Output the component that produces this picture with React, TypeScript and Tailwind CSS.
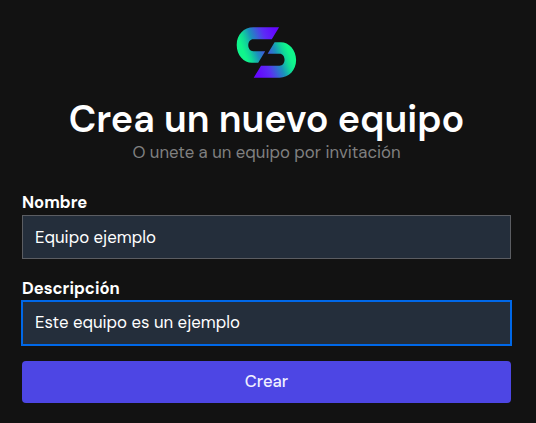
import { useState } from 'react';

function Logo() {
  const blade =
    'M160 33H82C54 33 32 55 32 86C32 117 54 140 78 140H97L118 105H82C73 105 67 97 67 87C67 77 73 69 82 69H138Z';
  return (
    <svg viewBox="31 32 182 154" className="h-[51px] w-[61px]" aria-label="Logo">
      <defs>
        <linearGradient id="blade" gradientUnits="userSpaceOnUse" x1="146" y1="46" x2="44" y2="84">
          <stop offset="0" stopColor="#6408ff" />
          <stop offset="0.3" stopColor="#5c2cf5" />
          <stop offset="0.66" stopColor="#1b91bc" />
          <stop offset="0.86" stopColor="#10d998" />
          <stop offset="1" stopColor="#10f58c" />
        </linearGradient>
      </defs>
      <path d={blade} fill="url(#blade)" />
      <path d={blade} fill="url(#blade)" transform="rotate(180 121.7 109)" />
    </svg>
  );
}

interface FieldProps {
  id: string;
  label: string;
  initial: string;
  active?: boolean;
}

function Field({ id, label, initial, active }: FieldProps) {
  const [value, setValue] = useState(initial);
  return (
    <div className="flex flex-col">
      <label htmlFor={id} className="self-start whitespace-nowrap pt-0.5 text-[16.6px] leading-6 font-bold">
        {label}
      </label>
      <input
        id={id}
        value={value}
        onChange={(e) => setValue(e.target.value)}
        className={`h-11 w-full border bg-[#242e3b] px-3 text-[16.8px] outline-none ${
          active ? 'border-[#0068e8] pb-0.5 ring-1 ring-[#0068e8]' : 'border-[#5b5d62]'
        }`}
      />
    </div>
  );
}

export default function App() {
  return (
    <main className="flex h-[423px] w-[536px] flex-col bg-[#121212] pr-[25px] pl-[22px] pt-[27px] font-['DM_Sans',Inter,sans-serif] text-white [font-optical-sizing:none]">
      <header className="flex flex-col items-center">
        <Logo />
        <h1 className="mt-[19px] whitespace-nowrap text-[37.7px] leading-[45px] font-semibold">
          Crea un nuevo equipo
        </h1>
        <p className="h-5 whitespace-nowrap text-[16.75px] leading-5 text-[#808080]">O unete a un equipo por invitación</p>
      </header>
      <form className="mt-[27px] flex flex-col" onSubmit={(e) => e.preventDefault()}>
        <Field id="name" label="Nombre" initial="Equipo ejemplo" />
        <div className="mt-4">
          <Field id="description" label="Descripción" initial="Este equipo es un ejemplo" active />
        </div>
        <button className="mt-4 h-[42px] rounded bg-[#4d46e4] pt-px text-[16.6px] font-medium text-[#f0efff]">Crear</button>
      </form>
    </main>
  );
}
